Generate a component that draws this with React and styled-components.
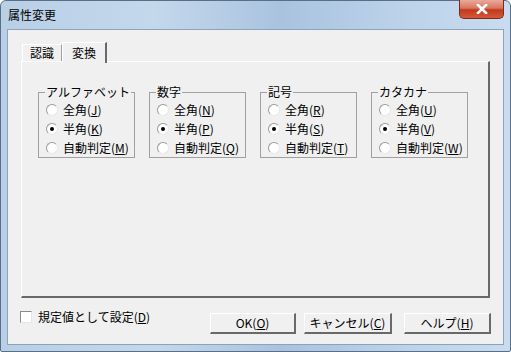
import styled, { createGlobalStyle } from 'styled-components';

const Global = createGlobalStyle`
  html, body { margin: 0; padding: 0; background: #fff; }
  body { font-family: "Noto Sans CJK JP", "Liberation Sans", sans-serif; }
`;

const Window = styled.div`
  width: 511px;
  height: 352px;
  box-sizing: border-box;
  display: flex;
  flex-direction: column;
  background: linear-gradient(90deg, #b8cfe6 0%, #c4d8ec 30%, #a9c3df 55%, #bcd3ea 80%, #c9dcef 100%);
  border: 1px solid #5a6f86;
  border-radius: 6px 6px 2px 2px;
  padding: 0 6px 6px 6px;
  font-size: 12px;
  color: #000;
`;

const TitleBar = styled.div`
  height: 28px;
  display: flex;
  align-items: flex-start;
  justify-content: space-between;
`;

const Title = styled.span`
  margin-top: 6px;
  margin-left: 1px;
  font-size: 12px;
  line-height: 16px;
  color: #000;
`;

const CloseButton = styled.div`
  width: 45px;
  height: 19px;
  margin-top: -1px;
  box-sizing: border-box;
  border: 1px solid #7a2a22;
  border-top: none;
  border-radius: 0 0 5px 5px;
  background: linear-gradient(180deg, #e9a99c 0%, #d9765f 45%, #c2391c 55%, #d6583c 100%);
  display: flex;
  align-items: center;
  justify-content: center;
`;

const Client = styled.div`
  flex: 1;
  background: #f0f0f0;
  border: 1px solid #8fa3b8;
  display: flex;
  flex-direction: column;
  padding: 12px 13px 0 13px;
`;

const TabRow = styled.div`
  display: flex;
  align-items: flex-end;
  height: 19px;
  padding-left: 1px;
  position: relative;
  z-index: 1;
`;

const Tab = styled.div`
  height: ${p => (p.$active ? '21px' : '17px')};
  padding: 0 ${p => (p.$active ? '9px' : '7px')};
  margin-bottom: ${p => (p.$active ? '-2px' : '0')};
  box-sizing: border-box;
  background: #f0f0f0;
  border-top: 1px solid #fff;
  border-left: 1px solid #fff;
  border-right: ${p => (p.$active ? '2px solid #696969' : '1px solid #a0a0a0')};
  display: flex;
  align-items: center;
  line-height: 14px;
`;

const Panel = styled.div`
  width: 469px;
  height: 237px;
  box-sizing: border-box;
  border-top: 1px solid #fff;
  border-left: 1px solid #fff;
  border-right: 2px solid #696969;
  border-bottom: 2px solid #696969;
  display: flex;
  align-items: flex-start;
  gap: 14px;
  padding: 24px 0 0 16px;
`;

const Group = styled.fieldset`
  width: 97px;
  height: 72px;
  box-sizing: border-box;
  margin: 0;
  padding: 2px 0 0 7px;
  border: 1px solid #a0a0a0;
  display: flex;
  flex-direction: column;
`;

const Legend = styled.legend`
  padding: 0 1px;
  margin-left: -1px;
  line-height: 12px;
  font-size: 12px;
  white-space: nowrap;
`;

const Option = styled.label`
  display: flex;
  align-items: center;
  gap: 5px;
  height: 19px;
  line-height: 14px;
  white-space: nowrap;
`;

const Radio = styled.span`
  width: 12px;
  height: 12px;
  flex: none;
  box-sizing: border-box;
  border-radius: 50%;
  border: 1px solid;
  border-color: #9a9a9a #e8e8e8 #e8e8e8 #9a9a9a;
  background: #fff;
  display: flex;
  align-items: center;
  justify-content: center;
  &::after {
    content: '';
    width: 4px;
    height: 4px;
    border-radius: 50%;
    background: ${p => (p.$checked ? '#000' : 'transparent')};
  }
`;

const Footer = styled.div`
  flex: 1;
  display: flex;
  align-items: flex-start;
  padding-top: 12px;
`;

const CheckLabel = styled.label`
  display: flex;
  align-items: center;
  gap: 6px;
  margin-left: -1px;
  height: 14px;
  line-height: 14px;
`;

const Box = styled.span`
  width: 12px;
  height: 12px;
  box-sizing: border-box;
  border: 1px solid;
  border-color: #8a8a8a #e6e6e6 #e6e6e6 #8a8a8a;
  background: #fff;
`;

const Buttons = styled.div`
  margin-left: auto;
  margin-top: 3px;
  margin-right: -1px;
  display: flex;
`;

const Button = styled.div`
  width: ${p => p.$w}px;
  height: 21px;
  margin-left: ${p => p.$gap || 0}px;
  box-sizing: border-box;
  background: #f0f0f0;
  border-top: 1px solid #fff;
  border-left: 1px solid #fff;
  border-right: 2px solid #696969;
  border-bottom: 2px solid #696969;
  display: flex;
  align-items: center;
  justify-content: center;
  line-height: 14px;
  white-space: nowrap;
`;

const groups = [
  { name: 'アルファベット', keys: ['J', 'K', 'M'] },
  { name: '数字', keys: ['N', 'P', 'Q'] },
  { name: '記号', keys: ['R', 'S', 'T'] },
  { name: 'カタカナ', keys: ['U', 'V', 'W'] },
];

const labels = ['全角', '半角', '自動判定'];

export default function App() {
  return (
    <>
      <Global />
      <Window>
        <TitleBar>
          <Title>属性変更</Title>
          <CloseButton>
            <svg width="12" height="10" viewBox="0 0 12 10">
              <path d="M2 1 L10 9 M10 1 L2 9" stroke="#fff" strokeWidth="2.6" strokeLinecap="square" />
            </svg>
          </CloseButton>
        </TitleBar>
        <Client>
          <TabRow>
            <Tab>認識</Tab>
            <Tab $active>変換</Tab>
          </TabRow>
          <Panel>
            {groups.map(g => (
              <Group key={g.name}>
                <Legend>{g.name}</Legend>
                {labels.map((l, i) => (
                  <Option key={l}>
                    <Radio $checked={i === 1} />
                    <span>{l}(<u>{g.keys[i]}</u>)</span>
                  </Option>
                ))}
              </Group>
            ))}
          </Panel>
          <Footer>
            <CheckLabel>
              <Box />
              <span>規定値として設定(<u>D</u>)</span>
            </CheckLabel>
            <Buttons>
              <Button $w={86}><span>OK(<u>O</u>)</span></Button>
              <Button $w={88} $gap={8}><span>キャンセル(<u>C</u>)</span></Button>
              <Button $w={87} $gap={12}><span>ヘルプ(<u>H</u>)</span></Button>
            </Buttons>
          </Footer>
        </Client>
      </Window>
    </>
  );
}
